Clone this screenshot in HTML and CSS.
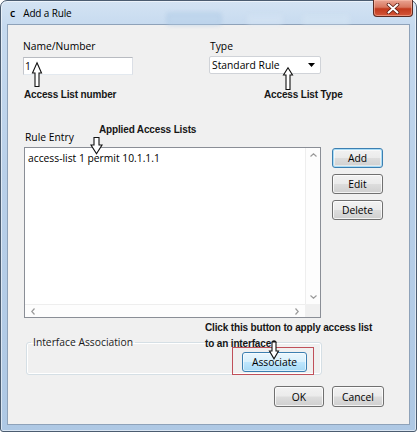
FILE: index.html
```html
<!DOCTYPE html>
<html>
<head>
<meta charset="utf-8">
<link rel="stylesheet" href="styles.css">
</head>
<body>
<div class="window">
  <div class="titlebar">
    <span class="blur blur-a"></span><span class="blur blur-b"></span><span class="blur blur-c"></span>
    <span class="app-icon">c</span>
    <span class="caption">Add a Rule</span>
    <div class="close">
      <svg width="14" height="11" viewBox="0 0 14 11"><path d="M2.5 1.5 L11.5 9.5 M11.5 1.5 L2.5 9.5" stroke="#5a1a10" stroke-width="3.6" stroke-linecap="round"/><path d="M2.5 1.5 L11.5 9.5 M11.5 1.5 L2.5 9.5" stroke="#ffffff" stroke-width="2" stroke-linecap="round"/></svg>
    </div>
  </div>
  <div class="client">
    <div class="row-top">
      <div class="field field-name">
        <div class="label">Name/Number</div>
        <div class="textbox">1</div>
      </div>
      <div class="field field-type">
        <div class="label">Type</div>
        <div class="combo">
          <span>Standard Rule</span>
          <svg class="combo-arrow" width="7" height="4" viewBox="0 0 7 4"><path d="M0 0 H7 L3.5 4 Z" fill="#000"/></svg>
        </div>
      </div>
    </div>
    <div class="label rules-label">Rule Entry</div>
    <div class="rules-row">
      <div class="listbox">
        <div class="list-content"><div class="item">access-list 1 permit 10.1.1.1</div></div>
        <div class="vscroll">
          <svg width="7" height="4" viewBox="0 0 7 4"><path d="M0.5 3.5 L3.5 0.8 L6.5 3.5" fill="none" stroke="#9a9a9a" stroke-width="1.2"/></svg>
          <svg width="7" height="4" viewBox="0 0 7 4"><path d="M0.5 0.5 L3.5 3.2 L6.5 0.5" fill="none" stroke="#9a9a9a" stroke-width="1.2"/></svg>
        </div>
        <div class="hscroll">
          <svg width="4" height="7" viewBox="0 0 4 7"><path d="M3.5 0.5 L0.8 3.5 L3.5 6.5" fill="none" stroke="#9a9a9a" stroke-width="1.2"/></svg>
          <svg width="4" height="7" viewBox="0 0 4 7"><path d="M0.5 0.5 L3.2 3.5 L0.5 6.5" fill="none" stroke="#9a9a9a" stroke-width="1.2"/></svg>
        </div>
        <div class="corner"></div>
      </div>
      <div class="side-buttons">
        <button class="btn btn-focus">Add</button>
        <button class="btn">Edit</button>
        <button class="btn">Delete</button>
      </div>
    </div>
    <fieldset class="group">
      <legend>Interface Association</legend>
      <button class="btn btn-assoc">Associate</button>
    </fieldset>
    <div class="footer">
      <button class="btn btn-ok">OK</button>
      <button class="btn btn-cancel">Cancel</button>
    </div>
  </div>

  <div class="note note-number">Access List number</div>
  <div class="note note-type">Access List Type</div>
  <div class="note note-applied">Applied Access Lists</div>
  <div class="note note-click">Click this button to apply access list<br>to an interface</div>
  <div class="highlight"></div>

  <svg class="arrow arrow-number" width="12" height="26" viewBox="0 0 12 26"><path d="M6 0.8 L10.5 11 L8 11 L8 24.5 L4 24.5 L4 11 L1.5 11 Z" fill="#fff" stroke="#111" stroke-width="1.1" stroke-linejoin="miter"/></svg>
  <svg class="arrow arrow-type" width="12" height="24" viewBox="0 0 12 24"><path d="M6 0.8 L10.5 8 L8 8 L8 22.5 L4 22.5 L4 8 L1.5 8 Z" fill="#fff" stroke="#111" stroke-width="1.1"/></svg>
  <svg class="arrow arrow-applied" width="13" height="18" viewBox="0 0 13 18"><path d="M4 0.5 L9 0.5 L9 8 L12 8 L6.5 16.8 L1 8 L4 8 Z" fill="#fff" stroke="#111" stroke-width="1.1"/></svg>
  <svg class="arrow arrow-assoc" width="12" height="20" viewBox="0 0 12 20"><circle cx="6" cy="2.5" r="2.2" fill="#111"/><path d="M4 2 L8 2 L8 11 L10.5 11 L6 18.8 L1.5 11 L4 11 Z" fill="#fff" stroke="#111" stroke-width="1.1"/></svg>
</div>
</body>
</html>
```
FILE: styles.css
```css
* { box-sizing: border-box; }
html, body { margin: 0; padding: 0; }
body {
  width: 417px;
  height: 432px;
  overflow: hidden;
  background: #ffffff;
  font-family: "Open Sans", "Liberation Sans", sans-serif;
  font-size: 10.3px;
  color: #000;
}
.window {
  position: relative;
  width: 417px;
  height: 432px;
  border: 1px solid #4b5c70;
  border-radius: 7px 7px 3px 3px;
  background: linear-gradient(180deg, #d3e3f3 0%, #c6daef 6%, #b9d0e9 40%, #aec8e4 100%);
  box-shadow: inset 0 0 0 1px rgba(255,255,255,0.55);
  display: flex;
  flex-direction: column;
  padding: 0 6px 6px 6px;
}
.titlebar {
  position: relative;
  height: 23px;
  display: flex;
  align-items: center;
  flex-shrink: 0;
}
.blur {
  position: absolute;
  border-radius: 3px;
  filter: blur(2px);
}
.blur-a { left: 160px; top: 12px; width: 54px; height: 12px; background: rgba(185,210,235,0.6); border: 1px solid rgba(140,175,210,0.45); }
.blur-b { left: 240px; top: 14px; width: 36px; height: 10px; background: rgba(215,230,245,0.5); }
.blur-c { left: 295px; top: 14px; width: 48px; height: 10px; background: rgba(215,230,245,0.45); }
.app-icon {
  position: relative;
  margin-left: 3px;
  font-size: 10.5px;
  font-weight: 600;
}
.caption {
  position: relative;
  margin-left: 8px;
  font-size: 10px;
  letter-spacing: -0.15px;
}
.close {
  position: absolute;
  right: -3px;
  top: -1px;
  width: 40px;
  height: 17px;
  border: 1px solid #5a2a22;
  border-top: none;
  border-radius: 0 0 4px 4px;
  background: linear-gradient(180deg, #e9a493 0%, #d8765e 45%, #c2391c 55%, #d3563a 100%);
  box-shadow: inset 0 0 0 1px rgba(255,200,180,0.5);
  display: flex;
  align-items: center;
  justify-content: center;
}
.client {
  flex: 1;
  background: #f0f0f0;
  border: 1px solid #8ea2b9;
  padding: 14px 25px 0 15px;
  display: flex;
  flex-direction: column;
}
.label {
  line-height: 14px;
  height: 14px;
}
.row-top {
  display: flex;
  gap: 76px;
}
.field-name { width: 110px; }
.field-type { width: 112px; }
.textbox {
  margin-top: 4px;
  height: 18px;
  background: #fff;
  border: 1px solid #c3c6cc;
  border-top-color: #b8bbc1;
  border-bottom-color: #e3e9ef;
  border-right-color: #dbdfe6;
  padding: 0 0 0 1px;
  line-height: 16px;
}
.field-type .label { padding-left: 1px; }
.combo {
  margin-top: 3px;
  height: 18px;
  background: #fff;
  border: 1px solid #d0d3d8;
  border-radius: 2px;
  padding: 0 4px 0 2px;
  display: flex;
  align-items: center;
  justify-content: space-between;
  line-height: 16px;
}
.combo-arrow { margin-right: 1px; }
.rules-label {
  margin-top: 55px;
  padding-left: 2px;
}
.rules-row {
  margin-top: 3px;
  display: flex;
  gap: 11px;
  margin-left: 1px;
}
.listbox {
  width: 297px;
  height: 171px;
  background: #fff;
  border: 1px solid #8a8e96;
  display: grid;
  grid-template-columns: 1fr 15px;
  grid-template-rows: 1fr 13px;
}
.list-content {
  padding: 3px 3px;
}
.item { line-height: 14px; }
.vscroll {
  background: #fdfdfd;
  border-left: 1px solid #eeeeee;
  display: flex;
  flex-direction: column;
  justify-content: space-between;
  align-items: center;
  padding: 5px 0 5px 1px;
}
.hscroll {
  background: #fdfdfd;
  border-top: 1px solid #eeeeee;
  display: flex;
  justify-content: space-between;
  align-items: center;
  padding: 0 6px 0 6px;
}
.corner { background: #f0f0f0; }
.side-buttons {
  margin-top: 1px;
  display: flex;
  flex-direction: column;
  gap: 6px;
}
.btn {
  font-family: "Open Sans", "Liberation Sans", sans-serif;
  font-size: 10.3px;
  color: #000;
  width: 51px;
  height: 20px;
  padding: 0;
  border: 1px solid #707070;
  border-radius: 3px;
  background: linear-gradient(180deg, #f2f2f2 0%, #ebebeb 48%, #dddddd 52%, #cfcfcf 100%);
  box-shadow: inset 0 0 0 1px rgba(255,255,255,0.75);
  line-height: 16px;
  text-align: center;
}
.btn-focus {
  border-color: #3c7fb1;
  box-shadow: inset 0 0 0 1px #a9dcf6, inset 0 0 0 2px rgba(255,255,255,0.5);
}
.group {
  margin: 17px 0 0 3px;
  width: 296px;
  padding: 3px 14px 2px 0;
  border: 1px solid #d5dfe5;
  border-radius: 3px;
  box-shadow: inset 0 0 0 1px #ffffff;
  display: flex;
  justify-content: flex-end;
}
.group legend {
  margin-left: 4px;
  padding: 0 2px;
  line-height: 14px;
  color: #1a1a1a;
}
.btn-assoc {
  width: 65px;
  height: 20px;
  border-color: #3c7fb1;
  background: linear-gradient(180deg, #eaf6fd 0%, #d9f0fc 48%, #bee6fd 52%, #a7d9f5 100%);
  box-shadow: inset 0 0 0 1px rgba(255,255,255,0.6);
}
.footer {
  margin-top: 11px;
  display: flex;
  justify-content: flex-end;
  gap: 8px;
}
.btn-ok { width: 50px; height: 21px; }
.btn-cancel { width: 52px; height: 21px; }

/* annotations overlaid on the screenshot */
.note {
  position: absolute;
  font-family: "Liberation Sans", Arial, sans-serif;
  font-weight: bold;
  font-size: 10px;
  letter-spacing: -0.15px;
  line-height: 15px;
  color: #161616;
  white-space: nowrap;
}
.note-number { left: 23px; top: 86px; }
.note-type { left: 263px; top: 86px; }
.note-applied { left: 98px; top: 121px; }
.note-click { left: 204px; top: 319px; line-height: 16px; }
.highlight {
  position: absolute;
  left: 231px;
  top: 346px;
  width: 82px;
  height: 28px;
  border: 1px solid #c0505a;
}
.arrow { position: absolute; overflow: visible; }
.arrow-number { left: 30px; top: 61px; }
.arrow-type { left: 281px; top: 66px; }
.arrow-applied { left: 89px; top: 136px; }
.arrow-assoc { left: 267px; top: 339px; }
```
